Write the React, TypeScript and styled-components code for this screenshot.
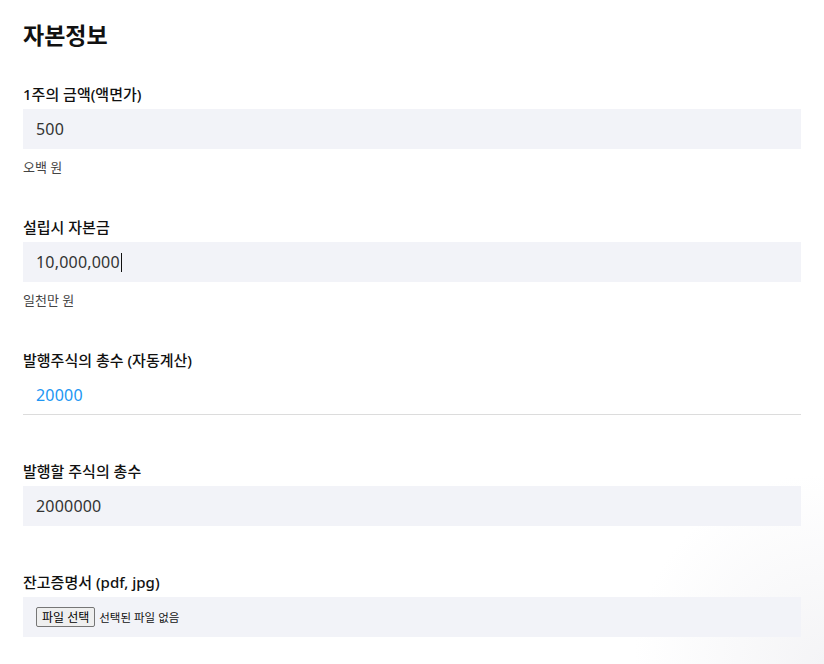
import styled, { createGlobalStyle } from 'styled-components';

const GlobalStyle = createGlobalStyle`
  body {
    margin: 0;
    background: #ffffff;
    font-family: 'Noto Sans', 'Noto Sans CJK KR', sans-serif;
    color: #111;
  }
`;

interface Field {
  label: string;
  value: string;
  helper?: string;
  readOnly?: boolean;
  caret?: boolean;
}

const fields: Field[] = [
  { label: '1주의 금액(액면가)', value: '500', helper: '오백 원' },
  { label: '설립시 자본금', value: '10,000,000', helper: '일천만 원', caret: true },
  { label: '발행주식의 총수 (자동계산)', value: '20000', readOnly: true },
  { label: '발행할 주식의 총수', value: '2000000' },
];

const App = (): JSX.Element => {
  return (
    <>
      <GlobalStyle />
      <Page>
        <Title>자본정보</Title>
        {fields.map((f) => (
          <Group key={f.label} hasHelper={!!f.helper}>
            <Label>{f.label}</Label>
            <InputBox readOnly={!!f.readOnly}>
              <Value readOnly={!!f.readOnly}>{f.value}</Value>
              {f.caret && <Caret />}
            </InputBox>
            {f.helper && <Helper>{f.helper}</Helper>}
          </Group>
        ))}
        <Group hasHelper={false}>
          <Label>잔고증명서 (pdf, jpg)</Label>
          <FileBox>
            <HiddenInput type="file" accept=".pdf,.jpg" />
            <FileButton>파일 선택</FileButton>
            <FileText>선택된 파일 없음</FileText>
          </FileBox>
        </Group>
      </Page>
    </>
  );
};

const Page = styled.div`
  height: 664px;
  overflow: hidden;
  box-sizing: border-box;
  padding: 18px 23px 0;
  background: radial-gradient(circle at 100% 100%, #f4f4f6 0, #ffffff 190px);
`;

const Title = styled.h2`
  margin: 0 0 31px;
  font-size: 23px;
  line-height: 34px;
  font-weight: 700;
  color: #111;
`;

const Group = styled.div<{ hasHelper: boolean }>`
  display: flex;
  flex-direction: column;
  margin-bottom: ${(p) => (p.hasHelper ? '40px' : '45px')};
  &:last-child {
    margin-bottom: 0;
  }
`;

const Label = styled.label`
  font-size: 15px;
  line-height: 22px;
  font-weight: 500;
  color: #111;
  margin-bottom: 4px;
`;

const InputBox = styled.div<{ readOnly: boolean }>`
  display: flex;
  align-items: center;
  height: 40px;
  padding: 0 13px;
  box-sizing: border-box;
  background: ${(p) => (p.readOnly ? 'transparent' : '#f2f3f8')};
  border-bottom: ${(p) => (p.readOnly ? '1px solid #dcdcdc' : 'none')};
`;

const Value = styled.span<{ readOnly: boolean }>`
  font-size: 16px;
  letter-spacing: 0.2px;
  color: ${(p) => (p.readOnly ? '#2196f3' : '#333')};
`;

const Caret = styled.span`
  display: inline-block;
  width: 1px;
  height: 19px;
  background: #111;
  margin-left: 1px;
`;

const Helper = styled.div`
  margin-top: 9px;
  font-size: 13px;
  line-height: 18px;
  color: #444;
`;

const FileBox = styled.label`
  display: flex;
  align-items: center;
  gap: 4px;
  height: 40px;
  padding: 0 13px;
  box-sizing: border-box;
  background: #f2f3f8;
  cursor: pointer;
`;

const HiddenInput = styled.input`
  display: none;
`;

const FileButton = styled.span`
  display: inline-flex;
  align-items: center;
  height: 18px;
  padding: 0 5px;
  border: 1px solid #767676;
  border-radius: 2px;
  background: #efefef;
  font-size: 12px;
  color: #000;
`;

const FileText = styled.span`
  font-size: 11.5px;
  color: #111;
`;

export default App;
